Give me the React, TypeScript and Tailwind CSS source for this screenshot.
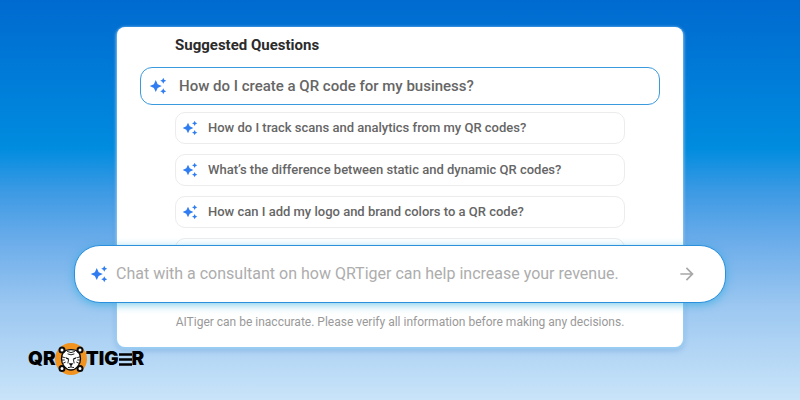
import type { FormEvent } from 'react'
import { MdArrowForward, MdAutoAwesome } from 'react-icons/md'

const FEATURED_QUESTION = 'How do I create a QR code for my business?'

const QUESTIONS = [
  'How do I track scans and analytics from my QR codes?',
  'What’s the difference between static and dynamic QR codes?',
  'How can I add my logo and brand colors to a QR code?',
]

function TigerMark() {
  return (
    <svg viewBox="0 0 32 32" className="-mx-px h-8 w-8 shrink-0" aria-hidden="true">
      <circle cx="16" cy="16" r="16" fill="#f2931f" />
      {/* head */}
      <path
        d="M8.500 9C10.500 7 13 6.600 16 6.600s5.500.4 7.500 2.400c1.500 2 2 4.600 2 7 0 3.300-1 5.600-2.800 7.600-1.700 2.100-3.800 3.400-6.700 3.400s-5-1.300-6.700-3.400C7.500 21.600 6.500 19.300 6.500 16c0-2.400.5-5 2-7z"
        fill="#fff"
        stroke="#0a0a0a"
        strokeWidth="1.300"
      />
      {/* corner eyelets */}
      <g fill="#fff" stroke="#0a0a0a" strokeWidth="2">
        <circle cx="7" cy="7" r="2.500" />
        <circle cx="25" cy="7" r="2.500" />
        <circle cx="7" cy="25.500" r="2.500" />
        <circle cx="25" cy="25.500" r="2.500" />
      </g>
      {/* stripes */}
      <g fill="none" stroke="#0a0a0a" strokeWidth=".9" strokeLinecap="round">
        <path d="M12.500 8.500 16 9.600l3.500-1.100M13 11l3 .8 3-.8" />
        <path d="M7.500 14l2 .6M7.300 17h2M8.300 20.200l2-1" />
        <path d="M24.500 14l-2 .6M24.700 17h-2M23.700 20.200l-2-1" />
        <path d="M13.600 16.500l-.7 3.500M18.400 16.500l.7 3.500" />
        <path d="M16 22.500v1.300M13.400 24.500c1.200 0 2-.2 2.600-.8.600.6 1.400.8 2.600.8" />
      </g>
      <path
        d="M10.300 14l3.700 1.600-.8.900c-1.500 0-2.500-1-2.900-2.500zM21.700 14l-3.700 1.600.8.900c1.500 0 2.500-1 2.900-2.500z"
        fill="#0a0a0a"
      />
      <path d="M13.700 20.300h4.600l-1.600 2.300h-1.400z" fill="#0a0a0a" />
    </svg>
  )
}

function Logo() {
  return (
    <a
      href="#"
      aria-label="QR Tiger"
      className="flex items-center font-['Inter',sans-serif] text-[19px] leading-8 font-black text-black"
    >
      <span>QR</span>
      <TigerMark />
      <span>TIG</span>
      <svg viewBox="0 0 13 13" className="h-[13px] w-[13px] shrink-0" aria-hidden="true">
        <path d="M0 1.500h13M0 6.500h13M0 11.500h13" stroke="#000" strokeWidth="2.600" />
      </svg>
      <span>R</span>
    </a>
  )
}

function ChatBar() {
  const handleSubmit = (e: FormEvent) => e.preventDefault()

  return (
    <form
      onSubmit={handleSubmit}
      className="relative -mx-[43px] -mt-[25px] flex h-[58px] items-center gap-2 rounded-[26px] border border-[#2b8fdc] bg-white pr-7 pl-[15px] shadow-[0_2px_9px_rgba(20,165,220,0.55)]"
    >
      <MdAutoAwesome className="h-[18px] w-[18px] shrink-0 text-[#2f7df0]" />
      <input
        type="text"
        aria-label="Chat with a consultant"
        placeholder="Chat with a consultant on how QRTiger can help increase your revenue."
        className="min-w-0 flex-1 bg-transparent text-base text-[#555] outline-none placeholder:text-[#adadad]"
      />
      <button type="submit" aria-label="Send" className="shrink-0 text-[#a8a8a8]">
        <MdArrowForward className="h-5 w-5" />
      </button>
    </form>
  )
}

export default function App() {
  return (
    <div className="flex min-h-screen flex-col items-center bg-[linear-gradient(to_bottom,#006ad0_0%,#008cdf_37%,#3d9ae4_48%,#6aacea_60%,#9dc8f1_77%,#c9e4f9_100%)] px-[74px] pt-[27px] pb-6 font-['Roboto',sans-serif]">
      <main className="w-full max-w-[652px] px-[43px]">
        <section className="rounded-lg bg-white pt-2 pb-4 shadow-[0_1px_3px_1px_rgba(160,215,250,0.8),0_3px_6px_rgba(60,120,190,0.4)]">
          <h1 className="px-[58px] text-[15px] leading-5 font-bold text-[#2b2b2b]">Suggested Questions</h1>

          <div className="mt-3 px-[23px]">
            <button
              type="button"
              className="flex h-[38px] w-full items-center gap-3 rounded-xl border border-[#3a9ade] px-2 text-left text-[15px] font-medium text-[#666]"
            >
              <MdAutoAwesome className="h-[18px] w-[18px] shrink-0 text-[#2f7df0]" />
              {FEATURED_QUESTION}
            </button>
          </div>

          <ul className="mt-[7px] space-y-2.5 px-[58px]">
            {QUESTIONS.map((question) => (
              <li key={question}>
                <button
                  type="button"
                  className="flex h-8 w-full items-center gap-2.5 rounded-[10px] border border-[#ececec] px-1.5 text-left text-[13px] font-medium text-[#666]"
                >
                  <MdAutoAwesome className="h-4 w-4 shrink-0 text-[#2f7df0]" />
                  {question}
                </button>
              </li>
            ))}
            <li className="h-8 rounded-[10px] border border-[#ececec]" />
          </ul>

          <ChatBar />

          <p className="mt-2.5 text-center text-xs leading-[18px] text-[#999]">
            AITiger can be inaccurate. Please verify all information before making any decisions.
          </p>
        </section>
      </main>

      <footer className="-mt-1 -ml-[46px] self-start">
        <Logo />
      </footer>
    </div>
  )
}
